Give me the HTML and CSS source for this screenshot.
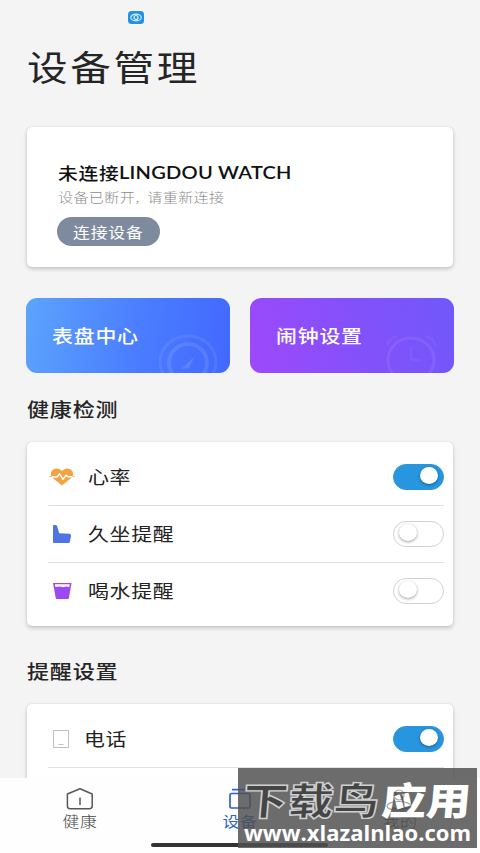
FILE: index.html
```html
<!DOCTYPE html>
<html lang="zh-CN">
<head>
<meta charset="utf-8">
<title>设备管理</title>
<link rel="stylesheet" href="styles.css">
</head>
<body>
<div class="screen">
  <div class="status">
    <svg class="status-eye" width="16" height="13" viewBox="0 0 16 13"><rect width="16" height="13" rx="3.5" fill="#2492de"/><ellipse cx="8" cy="6.5" rx="5.2" ry="3.3" fill="none" stroke="#d5efff" stroke-width="1.2"/><circle cx="8" cy="6.5" r="2" fill="none" stroke="#d5efff" stroke-width="1.2"/></svg>
  </div>
  <h1 class="title"><span class="wide">设备管理</span></h1>

  <section class="card device">
    <div class="device-name"><span class="wide">未连接</span><span class="latin">LINGDOU WATCH</span></div>
    <div class="device-note"><span class="wide">设备已断开<i class="comma">,</i>请重新连接</span></div>
    <button class="connect"><span class="wide">连接设备</span></button>
  </section>

  <div class="tiles">
    <div class="tile tile-blue">
      <span class="wide">表盘中心</span>
      <svg class="tile-art" width="60" height="40" viewBox="0 0 60 40" fill="none" stroke="#fff"><ellipse cx="30" cy="29" rx="28" ry="26" stroke-width="3" opacity=".08"/><ellipse cx="30" cy="30" rx="19" ry="19" stroke-width="4" opacity=".1"/><path d="M23 36L37 23L31 35Z" fill="#fff" stroke="none" opacity=".12"/></svg>
    </div>
    <div class="tile tile-purple">
      <span class="wide">闹钟设置</span>
      <svg class="tile-art" width="60" height="40" viewBox="0 0 60 40" fill="none" stroke="#fff"><ellipse cx="29" cy="27" rx="23" ry="22" stroke-width="3" opacity=".08"/><path d="M29 14V27H38M5 13Q7 5 15 3M43 3Q51 5 54 13" stroke-width="2.5" opacity=".05"/></svg>
    </div>
  </div>

  <h2 class="heading"><span class="wide">健康检测</span></h2>
  <section class="card list">
    <div class="row">
      <svg class="icon" width="26" height="20" viewBox="0 0 26 20"><path d="M13 18.5L3.2 10.5C.7 7.8 1.8 2.5 6.3 1.7C9 1.3 11.5 2.3 13 4C14.5 2.3 17 1.3 19.7 1.7C24.2 2.5 25.3 7.8 22.8 10.5Z" fill="#f2a444"/><path d="M2 10H8L10.5 7L14 12.2L17.2 8.2L19 9.8H24" fill="none" stroke="#fff" stroke-width="1.4"/><path d="M0.3 9.6H2.5M23.5 9.4H25.5" stroke="#f2a444"/></svg>
      <span class="label"><span class="wide">心率</span></span>
      <span class="switch on"><span class="knob"></span></span>
    </div>
    <div class="row">
      <svg class="icon" width="26" height="20" viewBox="0 0 26 20"><path d="M4 1.5Q4 1 5 1H6.5Q7.8 1 8.2 2.2L10.2 9.2L20.5 9.8Q22.4 10 22 12L20.8 18Q20.6 19 19.6 19H5Q4 19 4 18Z" fill="#4d73e4"/></svg>
      <span class="label"><span class="wide">久坐提醒</span></span>
      <span class="switch"><span class="knob"></span></span>
    </div>
    <div class="row">
      <svg class="icon" width="26" height="20" viewBox="0 0 26 20"><path d="M4 2H22.5L19.9 17.2Q19.7 18 18.8 18H8Q7 18 6.8 17.2Z" fill="#9b4af3"/><path d="M5.9 3.2H20.7L20.3 6Q17 4.8 14.5 6.2Q11 4.9 6.4 5.9Z" fill="#fff"/></svg>
      <span class="label"><span class="wide">喝水提醒</span></span>
      <span class="switch"><span class="knob"></span></span>
    </div>
  </section>

  <h2 class="heading heading-remind"><span class="wide">提醒设置</span></h2>
  <section class="card list list-remind">
    <div class="row">
      <svg class="icon" width="26" height="20" viewBox="0 0 26 20" fill="none" stroke="#c0c0c0"><rect x="4.5" y="1.5" width="15" height="17"/><path d="M9.5 15.5H14.5"/></svg>
      <span class="label label-phone"><span class="wide">电话</span></span>
      <span class="switch on"><span class="knob"></span></span>
    </div>
    <div class="row"></div>
  </section>
</div>

<nav class="nav">
  <div class="tab">
    <svg width="28" height="24" viewBox="0 0 28 24" fill="none" stroke="#55585c" stroke-width="1.5" stroke-linejoin="round"><path d="M14 1.8L26.2 7V19Q26.2 21.7 23.4 21.7H4.1Q1.4 21.7 1.4 19V7Z"/><path d="M14 10.5V18"/></svg>
    <span class="wide">健康</span>
  </div>
  <div class="tab active">
    <svg width="28" height="24" viewBox="0 0 28 24" fill="none" stroke="#2e62cf" stroke-width="1.7"><path d="M6 2.6H22"/><rect x="4" y="6.5" width="20" height="14.5" rx="1.5"/></svg>
    <span class="wide">设备</span>
  </div>
  <div class="tab">
    <svg width="28" height="24" viewBox="0 0 28 24" fill="none" stroke="#55585c" stroke-width="1.5"><circle cx="14" cy="6" r="4.5"/><ellipse cx="14" cy="17.2" rx="12" ry="4.8"/></svg>
    <span class="wide">我的</span>
  </div>
  <div class="home-bar"></div>
</nav>

<svg class="watermark" width="239" height="80" viewBox="0 0 239 80">
  <rect width="239" height="80" fill="#505050" fill-opacity=".84"/>
  <g class="wm-cn">
    <text class="wm-dark" transform="skewX(-5)" x="8" y="47" textLength="136" lengthAdjust="spacingAndGlyphs">下载鸟</text>
    <text class="wm-light" transform="skewX(-5)" x="147" y="47" textLength="89" lengthAdjust="spacingAndGlyphs">应用</text>
  </g>
  <g class="wm-ghost" fill="none" stroke="#555" stroke-width="1.2"><circle cx="161" cy="27" r="5"/><ellipse cx="161" cy="38" rx="12" ry="4.5"/></g>
  <text class="wm-url" x="6" y="73" textLength="227" lengthAdjust="spacingAndGlyphs">www.xlazalnlao.com</text>
</svg>
</body>
</html>
```
FILE: styles.css
```css
* { box-sizing: border-box; }
body {
  margin: 0;
  width: 480px;
  height: 853px;
  overflow: hidden;
  position: relative;
  background: #f4f4f4;
  color: #252525;
  font-family: "Noto Sans CJK SC", sans-serif;
}
.screen { height: 853px; padding: 0 27px; overflow: hidden; }
.wide {
  display: inline-block;
  white-space: nowrap;
  transform: scaleX(1.16);
  transform-origin: left center;
}
.status { height: 33px; padding: 11px 0 0 101px; }
.status-eye { display: block; }
.title { margin: 0; height: 94px; font-size: 35px; line-height: 65px; font-weight: 400; letter-spacing: 2.3px; }
.card {
  background: #fff;
  border-radius: 5px;
  box-shadow: 0 0 1px #b9c3cc, 0 2px 4px rgba(0, 0, 0, .2);
}
.device { height: 140px; padding: 33px 31px; width: 426px; }
.device-name { display: flex; height: 25px; font-size: 17px; line-height: 26px; font-weight: 500; color: #111; letter-spacing: .7px; }
.device-name .wide { width: 61px; }
.latin { font-family: Lato, sans-serif; font-weight: 600; letter-spacing: .2px; white-space: nowrap; transform: scaleX(1.18); transform-origin: left center; }
.device-note { height: 31px; font-size: 13px; line-height: 24px; color: #8c8c8c; font-weight: 300; letter-spacing: .3px; }
.comma { display: inline-block; width: 10.5px; font-style: normal; }
.connect {
  display: block;
  width: 103px;
  height: 29px;
  margin: 1px 0 0 -1px;
  padding: 0 0 0 16px;
  border: 0;
  border-radius: 15px;
  background: #7e8b9f;
  color: #fff;
  font: 400 14.5px/27px "Noto Sans CJK SC", sans-serif;
  letter-spacing: .7px;
  text-align: left;
}
.tiles { display: flex; gap: 20px; margin: 31px -1px 0; }
.tile {
  position: relative;
  width: 204px;
  height: 75px;
  padding-left: 26px;
  border-radius: 11px;
  overflow: hidden;
  color: #fff;
  font-size: 18px;
  font-weight: 500;
  line-height: 75px;
  letter-spacing: .7px;
}
.tile-blue { background: linear-gradient(100deg, #5ca4fd, #4a7dff 55%, #4268ff); }
.tile-purple { background: linear-gradient(75deg, #9d49fb, #8251fa 55%, #7158fc); }
.tile-art { position: absolute; right: 12px; bottom: 0; }
.heading { margin: 20px 0 18px; height: 31px; font-size: 19px; line-height: 31px; font-weight: 500; letter-spacing: .7px; }
.list { width: 426px; height: 184px; padding: 7.5px 9px 0 21px; }
.row { display: flex; align-items: center; height: 56.5px; border-bottom: 1px solid #e4e2df; }
.row:last-child { border-bottom: 0; }
.icon { flex: none; margin-left: 1px; }
.label { margin-left: 13px; flex: 1; font-size: 18px; line-height: 26px; padding-bottom: 2px; letter-spacing: .6px; color: #222; }
.label-phone { margin-left: 9px; }
.switch { width: 51px; height: 26px; padding: 2px 5px; border: 1px solid #d4d2d0; border-radius: 13px; background: #fff; }
.knob { display: block; width: 18px; height: 17px; border-radius: 50%; background: #fff; box-shadow: 0 1px 3px rgba(0, 0, 0, .4); }
.switch.on { background: #2796df; border-color: #2796df; }
.on .knob { margin-left: 21px; }
.heading-remind { margin: 29px 0 18px; }
.nav {
  position: absolute;
  left: 0;
  bottom: 0;
  display: flex;
  width: 480px;
  height: 75px;
  padding-top: 9px;
  background: #fefefe;
}
.tab { width: 160px; display: flex; flex-direction: column; align-items: center; font-size: 14.5px; line-height: 20px; font-weight: 300; color: #444; letter-spacing: .5px; }
.tab .wide { transform-origin: center; }
.tab.active { color: #2e62cf; font-weight: 400; }
.home-bar { position: absolute; left: 151px; bottom: 6px; width: 177px; height: 4px; border-radius: 2px; background: #333; }
.watermark { position: absolute; left: 238px; top: 768px; }
.wm-cn { font: 900 38px "Noto Sans CJK SC", sans-serif; }
.wm-dark { fill: #454545; stroke: #d0d0d0; stroke-width: 1.4px; }
.wm-light { fill: #fff; }
.wm-ghost { opacity: .5; }
.wm-url { font: 700 22px "Open Sans", sans-serif; fill: #fff; }
```
